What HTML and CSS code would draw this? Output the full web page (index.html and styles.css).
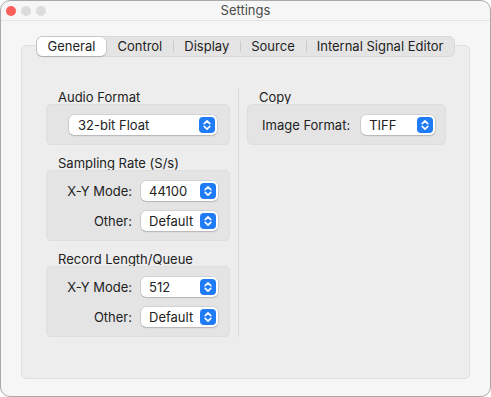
FILE: index.html
```html
<!DOCTYPE html>
<html>
<head>
    <title>Settings</title>
    <link rel="stylesheet" href="styles.css">
</head>
<body>
    <div class="window">
        <div class="titlebar">
            <div class="lights">
                <span class="light red"></span>
                <span class="light"></span>
                <span class="light"></span>
            </div>
            <div class="title">Settings</div>
            <div></div>
        </div>

        <div class="content">
            <div class="tabs">
                <div class="tab selected">General</div>
                <div class="tab">Control</div>
                <div class="tab sep">Display</div>
                <div class="tab sep">Source</div>
                <div class="tab sep">Internal Signal Editor</div>
            </div>

            <div class="panel">
                <div class="col col-left">
                    <div class="section-label">Audio Format</div>
                    <div class="group group-single">
                        <div class="popup wide">
                            <span>32-bit Float</span>
                            <span class="stepper"><svg width="16" height="16" viewBox="0 0 16 16"><path d="M5.2 6.6 L8 3.9 L10.8 6.6 M5.2 9.4 L8 12.1 L10.8 9.4" /></svg></span>
                        </div>
                    </div>

                    <div class="section-label">Sampling Rate (S/s)</div>
                    <div class="group group-rows">
                        <div class="row-label">X-Y Mode:</div>
                        <div class="popup">
                            <span>44100</span>
                            <span class="stepper"><svg width="16" height="16" viewBox="0 0 16 16"><path d="M5.2 6.6 L8 3.9 L10.8 6.6 M5.2 9.4 L8 12.1 L10.8 9.4" /></svg></span>
                        </div>
                        <div class="row-label">Other:</div>
                        <div class="popup">
                            <span>Default</span>
                            <span class="stepper"><svg width="16" height="16" viewBox="0 0 16 16"><path d="M5.2 6.6 L8 3.9 L10.8 6.6 M5.2 9.4 L8 12.1 L10.8 9.4" /></svg></span>
                        </div>
                    </div>

                    <div class="section-label">Record Length/Queue</div>
                    <div class="group group-rows">
                        <div class="row-label">X-Y Mode:</div>
                        <div class="popup">
                            <span>512</span>
                            <span class="stepper"><svg width="16" height="16" viewBox="0 0 16 16"><path d="M5.2 6.6 L8 3.9 L10.8 6.6 M5.2 9.4 L8 12.1 L10.8 9.4" /></svg></span>
                        </div>
                        <div class="row-label">Other:</div>
                        <div class="popup">
                            <span>Default</span>
                            <span class="stepper"><svg width="16" height="16" viewBox="0 0 16 16"><path d="M5.2 6.6 L8 3.9 L10.8 6.6 M5.2 9.4 L8 12.1 L10.8 9.4" /></svg></span>
                        </div>
                    </div>
                </div>

                <div class="divider"></div>

                <div class="col col-right">
                    <div class="section-label">Copy</div>
                    <div class="group group-inline">
                        <div class="row-label">Image Format:</div>
                        <div class="popup small">
                            <span>TIFF</span>
                            <span class="stepper"><svg width="16" height="16" viewBox="0 0 16 16"><path d="M5.2 6.6 L8 3.9 L10.8 6.6 M5.2 9.4 L8 12.1 L10.8 9.4" /></svg></span>
                        </div>
                    </div>
                </div>
            </div>
        </div>
    </div>
</body>
</html>
```

FILE: styles.css
```css
body {
    margin: 0;
    font-family: Inter, "Liberation Sans", Arial, sans-serif;
    font-size: 13px;
    color: #222;
    background: #fff;
}
.window {
    width: 491px;
    height: 397px;
    box-sizing: border-box;
    border: 1px solid #a9a9a9;
    border-radius: 10px;
    background: #f6f6f6;
    overflow: hidden;
    display: flex;
    flex-direction: column;
}
.titlebar {
    height: 19px;
    border-bottom: 1px solid #e3e3e3;
    display: grid;
    grid-template-columns: 1fr auto 1fr;
    align-items: center;
}
.lights {
    display: flex;
    gap: 5px;
    padding-left: 5px;
}
.light {
    width: 10px;
    height: 10px;
    border-radius: 50%;
    background: #dcdcdc;
}
.light.red {
    background: #fd5e57;
}
.title {
    color: #4a4a4a;
    font-size: 13px;
    line-height: 19px;
}
.content {
    flex: 1;
    display: flex;
    flex-direction: column;
    padding: 15px 20px 17px;
}
.tabs {
    align-self: center;
    display: flex;
    height: 19px;
    border: 1px solid #d9d9d9;
    border-radius: 6px;
    background: #e4e4e4;
    margin-bottom: -12px;
    position: relative;
    z-index: 1;
}
.tab {
    position: relative;
    padding: 0 11px;
    line-height: 19px;
    color: #1e1e1e;
}
.tab.sep::before {
    content: "";
    position: absolute;
    left: 0;
    top: 4px;
    height: 11px;
    border-left: 1px solid #cacaca;
}
.tab.selected {
    background: #fff;
    border-radius: 5px;
    box-shadow: 0 0 0 0.5px rgba(0, 0, 0, 0.18), 0 1px 1.5px rgba(0, 0, 0, 0.12);
}
.panel {
    flex: 1;
    display: flex;
    border: 1px solid #e0e0e0;
    border-radius: 5px;
    background: #ededed;
    padding: 43px 23px 0 24px;
}
.col-left {
    width: 184px;
    display: flex;
    flex-direction: column;
}
.col-right {
    width: 199px;
    display: flex;
    flex-direction: column;
}
.divider {
    width: 1px;
    background: #dadada;
    margin: -1px 8px 0;
    height: 249px;
}
.section-label {
    padding-top: 1px;
    line-height: 14px;
    padding-left: 12px;
}
.group {
    border: 1px solid #dedede;
    border-radius: 5px;
    background: #e4e4e4;
    margin-bottom: 10px;
}
.group-single {
    padding: 10px 0 9px 22px;
}
.group-rows {
    display: grid;
    grid-template-columns: 85px 77px;
    column-gap: 9px;
    row-gap: 10px;
    align-items: center;
    padding: 10px 0 9px;
}
.group-inline {
    display: flex;
    align-items: center;
    gap: 11px;
    padding: 10px 0 9px 14px;
}
.row-label {
    text-align: right;
}
.popup {
    height: 20px;
    box-sizing: border-box;
    display: flex;
    align-items: center;
    justify-content: space-between;
    padding: 0 2px 0 8px;
    background: #fff;
    border-radius: 5px;
    box-shadow: 0 0 0 0.5px rgba(0, 0, 0, 0.16), 0 1px 1.5px rgba(0, 0, 0, 0.14);
}
.popup.wide {
    width: 148px;
    padding-left: 9px;
}
.popup.small {
    width: 74px;
}
.stepper {
    width: 16px;
    height: 16px;
    border-radius: 4px;
    background: #1f7cf6;
    display: flex;
}
.stepper path {
    fill: none;
    stroke: #fff;
    stroke-width: 1.6;
    stroke-linecap: round;
    stroke-linejoin: round;
}
```
